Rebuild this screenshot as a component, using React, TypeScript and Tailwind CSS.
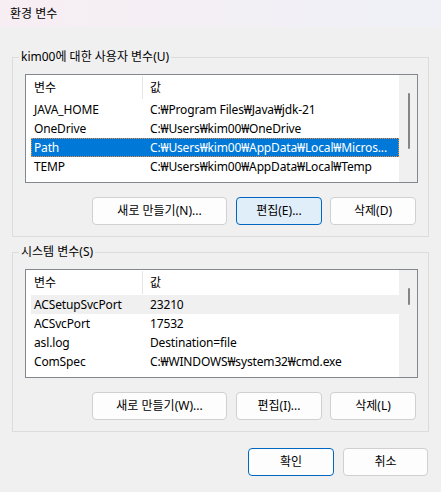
import React from 'react';

type Row = { name: string; value: string };

const userRows: Row[] = [
    { name: 'JAVA_HOME', value: 'C:₩Program Files₩Java₩jdk-21' },
    { name: 'OneDrive', value: 'C:₩Users₩kim00₩OneDrive' },
    { name: 'Path', value: 'C:₩Users₩kim00₩AppData₩Local₩Micros...' },
    { name: 'TEMP', value: 'C:₩Users₩kim00₩AppData₩Local₩Temp' },
];

const systemRows: Row[] = [
    { name: 'ACSetupSvcPort', value: '23210' },
    { name: 'ACSvcPort', value: '17532' },
    { name: 'asl.log', value: 'Destination=file' },
    { name: 'ComSpec', value: 'C:₩WINDOWS₩system32₩cmd.exe' },
];

interface VarListProps {
    rows: Row[];
    selected?: number;
    hovered?: number;
    thumbHeight: string;
}

const VarList: React.FC<VarListProps> = ({ rows, selected, hovered, thumbHeight }) => (
    <div className="flex w-[393px] h-[109px] border border-[#828790] bg-white overflow-hidden">
        <div className="flex-1 flex flex-col pl-[5px] overflow-hidden">
            <div className="flex items-center h-[25px] shrink-0">
                <div className="w-[111px] pl-[3px]">변수</div>
                <div className="w-px h-[23px] bg-[#e5e5e5]" />
                <div className="pl-[7px]">값</div>
            </div>
            {rows.map((row, i) => {
                let cls = 'flex items-center h-[19px] shrink-0 whitespace-nowrap tracking-[-0.15px]';
                if (i === selected) cls += ' bg-[#0078d7] text-white border border-dotted border-[#f08a3c]';
                else if (i === hovered) cls += ' bg-[#f0f0f0]';
                return (
                    <div key={row.name} className={cls}>
                        <div className={i === selected ? 'w-[118px] pl-[2px]' : 'w-[119px] pl-[3px]'}>{row.name}</div>
                        <div className="flex-1 overflow-hidden">{row.value}</div>
                    </div>
                );
            })}
        </div>
        <div className="w-[18px] bg-[#f0f0f0] flex justify-center pt-[18px] pl-[1px]">
            <div className={`w-[2px] rounded-full bg-[#858585] ${thumbHeight}`} />
        </div>
    </div>
);

const Btn: React.FC<{ label: string; w: string; variant?: 'default' | 'focus' | 'primary'; className?: string }> = ({ label, w, variant = 'default', className = '' }) => {
    let look = 'bg-[#fdfdfd] border-[#d0d0d0]';
    if (variant === 'focus') look = 'bg-[#e0eef9] border-[#0067c0]';
    if (variant === 'primary') look = 'bg-[#fdfdfd] border-[#0067c0]';
    return (
        <button className={`${w} h-[28px] border rounded-[4px] flex items-center justify-center text-black ${look} ${className}`}>
            {label}
        </button>
    );
};

const Group: React.FC<{ title: string; children: React.ReactNode; className?: string }> = ({ title, children, className = '' }) => (
    <div className={`relative w-[417px] border border-[#dcdcdc] pt-[16px] pl-[12px] pb-[11px] ${className}`}>
        <span className="absolute left-[6px] top-[-9px] px-[2px] leading-[16px] bg-[#f0f0f0]">{title}</span>
        {children}
    </div>
);

export default function App() {
    return (
        <div className="w-[441px] h-[492px] bg-[#f0f0f0] text-[12px] text-black flex flex-col font-['Noto_Sans','Noto_Sans_CJK_KR',sans-serif]">
            <div className="h-[27px] flex items-center pl-[10px] bg-gradient-to-r from-[#f7eef3] to-[#eff1f7]">환경 변수</div>
            <div className="flex flex-col px-[12px] pt-[30px]">
                <Group title="kim00에 대한 사용자 변수(U)">
                    <VarList rows={userRows} selected={2} thumbHeight="h-[56px]" />
                    <div className="flex mt-[14px] ml-[67px]">
                        <Btn label="새로 만들기(N)..." w="w-[135px]" />
                        <Btn label="편집(E)..." w="w-[86px]" variant="focus" className="ml-[9px]" />
                        <Btn label="삭제(D)" w="w-[86px]" className="ml-[8px]" />
                    </div>
                </Group>
                <Group title="시스템 변수(S)" className="mt-[15px]">
                    <VarList rows={systemRows} hovered={0} thumbHeight="h-[17px]" />
                    <div className="flex mt-[14px] ml-[67px]">
                        <Btn label="새로 만들기(W)..." w="w-[135px]" />
                        <Btn label="편집(I)..." w="w-[86px]" className="ml-[9px]" />
                        <Btn label="삭제(L)" w="w-[86px]" className="ml-[8px]" />
                    </div>
                </Group>
                <div className="flex justify-end mt-[16px] mr-[1px]">
                    <Btn label="확인" w="w-[86px]" variant="primary" />
                    <Btn label="취소" w="w-[85px]" className="ml-[9px]" />
                </div>
            </div>
        </div>
    );
}
